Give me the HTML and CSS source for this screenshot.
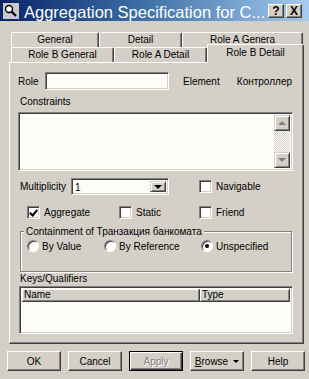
FILE: index.html
```html
<!DOCTYPE html>
<html lang="en">
<head>
    <meta charset="UTF-8">
    <title>Aggregation Specification</title>
    <link rel="stylesheet" href="styles.css">
</head>
<body>
    <div class="window">
        <div class="titlebar">
            <span class="app-icon">
                <svg width="16" height="16" viewBox="0 0 16 16">
                    <rect width="16" height="16" fill="#c8c8c8"/>
                    <circle cx="6" cy="6" r="3.5" fill="#fff" stroke="#000" stroke-width="1.4"/>
                    <path d="M8.6 8.6 L13 13" stroke="#000" stroke-width="2.2"/>
                </svg>
            </span>
            <span class="title">Aggregation Specification for C...</span>
            <span class="caption-btns">
                <span class="cap-btn">?</span>
                <span class="cap-btn">X</span>
            </span>
        </div>

        <div class="tabstrip">
            <div class="tab-row">
                <div class="tab tab-general">General</div>
                <div class="tab tab-detail">Detail</div>
                <div class="tab tab-role-a-gen">Role A Genera</div>
            </div>
            <div class="tab-row">
                <div class="tab tab-role-b-gen">Role B General</div>
                <div class="tab tab-role-a-det">Role A Detail</div>
                <div class="tab tab-role-b-det active">Role B Detail</div>
            </div>
        </div>

        <div class="panel">
            <div class="role-row">
                <span class="role-label">Role</span>
                <span class="field role-input"></span>
                <span class="element-label">Element</span>
                <span class="element-name">Контроллер</span>
            </div>

            <div class="caption">Constraints</div>
            <div class="field memo">
                <div class="scrollbar">
                    <span class="sb-btn"><i class="arrow up"></i></span>
                    <span class="sb-track"></span>
                    <span class="sb-btn"><i class="arrow down"></i></span>
                </div>
            </div>

            <div class="mult-row">
                <span class="mult-label">Multiplicity</span>
                <span class="field combo">
                    <span class="combo-value">1</span>
                    <span class="combo-btn"><i class="arrow down dark"></i></span>
                </span>
                <label class="check nav-check"><span class="box"></span>Navigable</label>
            </div>

            <div class="check-row">
                <label class="check"><span class="box checked"></span>Aggregate</label>
                <label class="check"><span class="box"></span>Static</label>
                <label class="check"><span class="box"></span>Friend</label>
            </div>

            <div class="group">
                <span class="group-title">Containment of Транзакция банкомата</span>
                <div class="radio-row">
                    <label class="radio"><span class="dot"></span>By Value</label>
                    <label class="radio"><span class="dot"></span>By Reference</label>
                    <label class="radio"><span class="dot on"></span>Unspecified</label>
                </div>
            </div>

            <div class="caption keys">Keys/Qualifiers</div>
            <div class="field listview">
                <div class="list-head">
                    <span class="col col-name">Name</span>
                    <span class="col col-type">Type</span>
                </div>
            </div>
        </div>

        <div class="actions">
            <span class="btn">OK</span>
            <span class="btn">Cancel</span>
            <span class="btn default disabled">Apply</span>
            <span class="btn"><span><u>B</u>rowse</span><i class="arrow down dark small"></i></span>
            <span class="btn">Help</span>
        </div>
    </div>
</body>
</html>
```

FILE: styles.css
```css
* {
    box-sizing: border-box;
}
body {
    margin: 0;
    font-family: "Liberation Sans", Arial, sans-serif;
    font-size: 10px;
    color: #000;
    background: #d4d0c8;
}
.window {
    width: 309px;
    height: 379px;
    background: #d4d0c8;
    overflow: hidden;
}

/* title bar */
.titlebar {
    height: 21px;
    display: flex;
    align-items: flex-start;
    background: linear-gradient(to right, #0a246a, #3a6ea5 45%, #a6caf0);
    padding: 3px 0 0 3px;
}
.app-icon {
    width: 16px;
    height: 16px;
    display: block;
}
.app-icon svg {
    display: block;
}
.title {
    margin-left: 5px;
    font-size: 16.5px;
    line-height: 18px;
    color: #fff;
    white-space: nowrap;
}
.caption-btns {
    margin-left: auto;
    margin-right: 7px;
    margin-top: 1px;
    display: flex;
    gap: 2px;
}
.cap-btn {
    width: 16px;
    height: 14px;
    background: #d4d0c8;
    border-top: 1px solid #fff;
    border-left: 1px solid #fff;
    border-right: 1px solid #404040;
    border-bottom: 1px solid #404040;
    box-shadow: inset -1px -1px #808080;
    font-weight: bold;
    font-size: 12px;
    line-height: 12px;
    text-align: center;
}

/* tabs */
.tabstrip {
    margin: 11px 0 0 11px;
}
.tab-row {
    display: flex;
    align-items: flex-start;
    height: 15px;
}
.tab {
    height: 15px;
    line-height: 14px;
    text-align: center;
    background: #d4d0c8;
    border-top: 1px solid #fff;
    border-left: 1px solid #fff;
    border-right: 1px solid #404040;
    border-radius: 2px 2px 0 0;
    box-shadow: inset -1px 0 #808080;
    white-space: nowrap;
    overflow: hidden;
}
.tab-general { width: 88px; }
.tab-detail { width: 83px; }
.tab-role-a-gen { width: 121px; }
.tab-role-b-gen { width: 103px; }
.tab-role-a-det { width: 93px; }
.tab-role-b-det { width: 97px; }
.tab.active {
    position: relative;
    z-index: 1;
    height: 19px;
    margin-top: -3px;
    line-height: 16px;
}

/* panel */
.panel {
    margin-left: 9px;
    width: 295px;
    height: 282px;
    border-top: 1px solid #fff;
    border-left: 1px solid #fff;
    border-right: 1px solid #404040;
    border-bottom: 1px solid #404040;
    box-shadow: inset -1px -1px #808080;
    padding: 9px 10px 0 8px;
}
.field {
    background: #fcfdf9;
    border-top: 1px solid #808080;
    border-left: 1px solid #808080;
    border-right: 1px solid #fff;
    border-bottom: 1px solid #fff;
    box-shadow: inset 1px 1px #404040, inset -1px -1px #d4d0c8;
}
.role-row {
    display: flex;
    align-items: center;
    height: 18px;
}
.role-label {
    width: 27px;
}
.role-input {
    width: 124px;
    height: 18px;
}
.element-label {
    margin-left: 14px;
}
.element-name {
    margin-left: auto;
    margin-right: 1px;
}
.caption {
    margin-top: 5px;
    line-height: 13px;
    padding-left: 2px;
}
.memo {
    margin-top: 4px;
    height: 59px;
    display: flex;
    justify-content: flex-end;
    padding: 2px;
}
.scrollbar {
    width: 16px;
    display: flex;
    flex-direction: column;
}
.sb-btn {
    height: 16px;
    background: #d4d0c8;
    border-top: 1px solid #d4d0c8;
    border-left: 1px solid #d4d0c8;
    border-right: 1px solid #404040;
    border-bottom: 1px solid #404040;
    box-shadow: inset 1px 1px #fff, inset -1px -1px #808080;
    display: flex;
    align-items: center;
    justify-content: center;
}
.sb-track {
    flex: 1;
    background-color: #fff;
    background-image: repeating-conic-gradient(#d4d0c8 0 25%, #fff 0 50%);
    background-size: 2px 2px;
}
.arrow {
    display: block;
    width: 0;
    height: 0;
    border-left: 4px solid transparent;
    border-right: 4px solid transparent;
}
.arrow.up {
    border-bottom: 4px solid #808080;
}
.arrow.down {
    border-top: 4px solid #808080;
}
.arrow.dark {
    border-top-color: #000;
}
.arrow.small {
    border-left-width: 3px;
    border-right-width: 3px;
    border-top-width: 3px;
}

.mult-row {
    margin-top: 7px;
    height: 17px;
    display: flex;
    align-items: center;
}
.mult-label {
    width: 53px;
    padding-left: 2px;
}
.combo {
    width: 98px;
    height: 17px;
    display: flex;
    align-items: stretch;
    padding: 2px;
}
.combo-value {
    flex: 1;
    line-height: 13px;
    padding-left: 1px;
}
.combo-btn {
    width: 16px;
    background: #d4d0c8;
    border-top: 1px solid #d4d0c8;
    border-left: 1px solid #d4d0c8;
    border-right: 1px solid #404040;
    border-bottom: 1px solid #404040;
    box-shadow: inset 1px 1px #fff, inset -1px -1px #808080;
    display: flex;
    align-items: center;
    justify-content: center;
}
.nav-check {
    margin-left: 30px;
}

.check {
    display: flex;
    align-items: center;
    gap: 4px;
    white-space: nowrap;
}
.box {
    width: 13px;
    height: 13px;
    background: #fff;
    border-top: 1px solid #808080;
    border-left: 1px solid #808080;
    border-right: 1px solid #fff;
    border-bottom: 1px solid #fff;
    box-shadow: inset 1px 1px #404040, inset -1px -1px #d4d0c8;
    position: relative;
}
.box.checked::after {
    content: "";
    position: absolute;
    left: 3px;
    top: 1px;
    width: 3px;
    height: 6px;
    border-right: 2px solid #000;
    border-bottom: 2px solid #000;
    transform: rotate(40deg);
}
.check-row {
    margin-top: 10px;
    height: 14px;
    display: grid;
    grid-template-columns: 92px 80px 1fr;
    align-items: center;
    padding-left: 9px;
}

.group {
    margin: 12px 1px 0 2px;
    height: 41px;
    border: 1px solid #808080;
    box-shadow: inset 1px 1px #fff, 1px 1px #fff;
}
.group-title {
    display: table;
    margin: -7px 0 0 3px;
    padding: 0 2px;
    line-height: 13px;
    background: #d4d0c8;
}
.radio-row {
    margin-top: 2px;
    display: grid;
    grid-template-columns: 77px 97px 1fr;
    padding-left: 6px;
}
.radio {
    display: flex;
    align-items: center;
    gap: 3px;
    white-space: nowrap;
}
.dot {
    width: 12px;
    height: 12px;
    border-radius: 50%;
    background: #fff;
    border: 1px solid;
    border-color: #808080 #fff #fff #808080;
    box-shadow: inset 1px 1px #404040;
    display: flex;
    align-items: center;
    justify-content: center;
}
.dot.on::after {
    content: "";
    width: 4px;
    height: 4px;
    border-radius: 50%;
    background: #000;
}

.keys {
    margin-top: 0;
}
.listview {
    margin: 1px 0 0 1px;
    height: 48px;
    padding: 2px;
}
.list-head {
    display: flex;
    height: 13px;
}
.col {
    background: #d4d0c8;
    border-right: 1px solid #404040;
    border-bottom: 1px solid #404040;
    box-shadow: inset 1px 1px #fff, inset -1px -1px #808080;
    line-height: 12px;
    padding-left: 2px;
}
.col-name {
    width: 178px;
}
.col-type {
    flex: 1;
}

/* bottom buttons */
.actions {
    display: flex;
    gap: 7px;
    margin: 7px 0 0 7px;
}
.btn {
    width: 54px;
    height: 20px;
    display: flex;
    align-items: center;
    justify-content: center;
    gap: 5px;
    background: #d4d0c8;
    border-top: 1px solid #fff;
    border-left: 1px solid #fff;
    border-right: 1px solid #404040;
    border-bottom: 1px solid #404040;
    box-shadow: inset -1px -1px #808080;
}
.btn.default {
    border: 1px solid #000;
    box-shadow: inset 1px 1px #fff, inset -1px -1px #404040, inset -2px -2px #808080;
}
.btn.disabled {
    color: #808080;
    text-shadow: 1px 1px #fff;
}
```
